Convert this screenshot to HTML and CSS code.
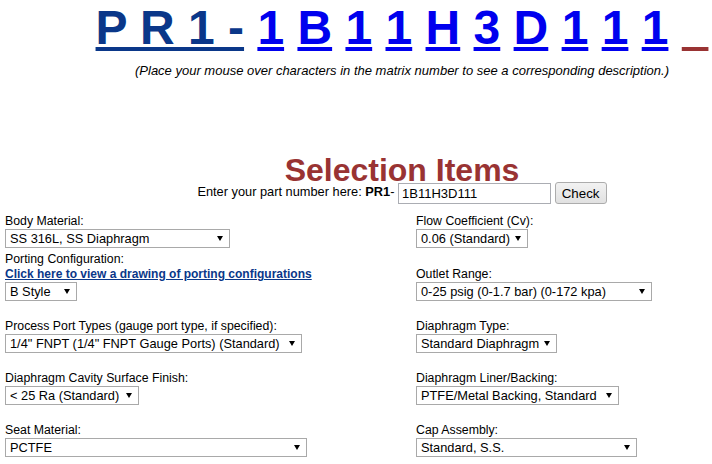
FILE: index.html
```html
<!doctype html>
<html lang="en">
  <head>
    <meta charset="UTF-8" />
    <meta name="viewport" content="width=device-width, initial-scale=1.0" />
    <title>PR1 Configurator - Selection Items</title>
    <link rel="stylesheet" href="styles.css">
  </head>
  <body>
    <div class="page">
      <!-- Matrix number -->
      <div class="matrix">
        <a href="#" class="prefix">P R 1 -</a>
        <a href="#" class="digit">1</a>
        <a href="#" class="digit">B</a>
        <a href="#" class="digit">1</a>
        <a href="#" class="digit">1</a>
        <a href="#" class="digit">H</a>
        <a href="#" class="digit">3</a>
        <a href="#" class="digit">D</a>
        <a href="#" class="digit">1</a>
        <a href="#" class="digit">1</a>
        <a href="#" class="digit">1</a>
        <span class="blank">&nbsp;&nbsp;</span>
      </div>
      <p class="hint">(Place your mouse over characters in the matrix number to see a corresponding description.)</p>

      <h1 class="title">Selection Items</h1>
      <form class="part-form">
        Enter your part number here: <b>PR1</b>- <input type="text" class="part-input" value="1B11H3D111" /> <button type="button" class="btn">Check</button>
      </form>

      <div class="options">
        <div class="field">
          <label>Body Material:</label>
          <span class="sel sel-body"><select><option>SS 316L, SS Diaphragm</option></select></span>
        </div>
        <div class="field">
          <label>Flow Coefficient (Cv):</label>
          <span class="sel sel-cv"><select><option>0.06 (Standard)</option></select></span>
        </div>

        <div class="field field-tight">
          <label>Porting Configuration:</label>
          <a href="#" class="drawing-link">Click here to view a drawing of porting configurations</a>
          <span class="sel sel-porting"><select><option>B Style</option></select></span>
        </div>
        <div class="field field-tight">
          <label>Outlet Range:</label>
          <span class="sel sel-outlet"><select><option>0-25 psig (0-1.7 bar) (0-172 kpa)</option></select></span>
        </div>

        <div class="field">
          <label>Process Port Types (gauge port type, if specified):</label>
          <span class="sel sel-ports"><select><option>1/4" FNPT (1/4" FNPT Gauge Ports) (Standard)</option></select></span>
        </div>
        <div class="field">
          <label>Diaphragm Type:</label>
          <span class="sel sel-diaphragm"><select><option>Standard Diaphragm</option></select></span>
        </div>

        <div class="field">
          <label>Diaphragm Cavity Surface Finish:</label>
          <span class="sel sel-finish"><select><option>&lt; 25 Ra (Standard)</option></select></span>
        </div>
        <div class="field">
          <label>Diaphragm Liner/Backing:</label>
          <span class="sel sel-liner"><select><option>PTFE/Metal Backing, Standard</option></select></span>
        </div>

        <div class="field">
          <label>Seat Material:</label>
          <span class="sel sel-seat"><select><option>PCTFE</option></select></span>
        </div>
        <div class="field">
          <label>Cap Assembly:</label>
          <span class="sel sel-cap"><select><option>Standard, S.S.</option></select></span>
        </div>
      </div>
    </div>
  </body>
</html>
```

FILE: styles.css
```css
html,
body {
  overflow: hidden;
}

body {
  margin: 0;
  background: #fff;
  color: #000;
  font-family: 'Liberation Sans', Arial, sans-serif;
  font-size: 13px;
}

.page {
  width: 804px;
}

/* Matrix number header */
.matrix {
  text-align: center;
  white-space: nowrap;
  font-size: 48px;
  font-weight: bold;
  line-height: 55px;
}

.matrix a {
  text-decoration: underline;
}

.prefix {
  color: #0a3789;
}

.digit {
  color: #0000ee;
}

.blank {
  color: #993333;
  text-decoration: underline;
}

.hint {
  margin: 8px 0 0;
  text-align: center;
  font-style: italic;
  font-size: 13px;
  line-height: 15px;
}

.title {
  margin: 80px 0 0;
  text-align: center;
  color: #993333;
  font-size: 32px;
  line-height: 24px;
}

.part-form {
  margin: 0;
  text-align: center;
  font-size: 12.8px;
}

.part-input {
  width: 153px;
  height: 21px;
  box-sizing: border-box;
  border: 1px solid #abadb3;
  padding: 0 3px;
  font-family: inherit;
  font-size: 13px;
  vertical-align: middle;
}

.btn {
  width: 52px;
  height: 22px;
  box-sizing: border-box;
  border: 1px solid #acacac;
  border-radius: 3px;
  background: linear-gradient(#f2f2f2, #e1e1e1);
  font-family: inherit;
  font-size: 13.33px;
  color: #000;
  padding: 0;
  vertical-align: middle;
}

/* Option grid */
.options {
  display: grid;
  grid-template-columns: 411px 1fr;
  align-items: end;
  padding-left: 5px;
  margin-top: 10px;
}

.field {
  display: flex;
  flex-direction: column;
  align-items: flex-start;
  padding-top: 18px;
  font-size: 12.3px;
  line-height: 15px;
}

.options .field:nth-child(1),
.options .field:nth-child(2) {
  padding-top: 0;
}

.field-tight {
  padding-top: 4px;
}

.drawing-link {
  color: #0a3789;
  font-weight: bold;
  font-size: 12px;
}

.sel {
  position: relative;
  display: inline-block;
}

.sel select {
  appearance: none;
  -webkit-appearance: none;
  display: block;
  width: 100%;
  height: 19px;
  box-sizing: border-box;
  margin: 0;
  border: 1px solid #a9a9a9;
  border-radius: 0;
  padding: 0 12px 0 4px;
  background: #fff;
  color: #000;
  font-family: inherit;
  font-size: 12.8px;
}

.sel::after {
  content: '';
  position: absolute;
  right: 7px;
  top: 7px;
  border-left: 3px solid transparent;
  border-right: 3px solid transparent;
  border-top: 5px solid #000;
  pointer-events: none;
}

.sel-body { width: 225px; }
.sel-porting { width: 72px; }
.sel-ports { width: 297px; }
.sel-finish { width: 134px; }
.sel-seat { width: 302px; }
.sel-cv { width: 112px; }
.sel-outlet { width: 236px; }
.sel-diaphragm { width: 141px; }
.sel-liner { width: 203px; }
.sel-cap { width: 221px; }
```
